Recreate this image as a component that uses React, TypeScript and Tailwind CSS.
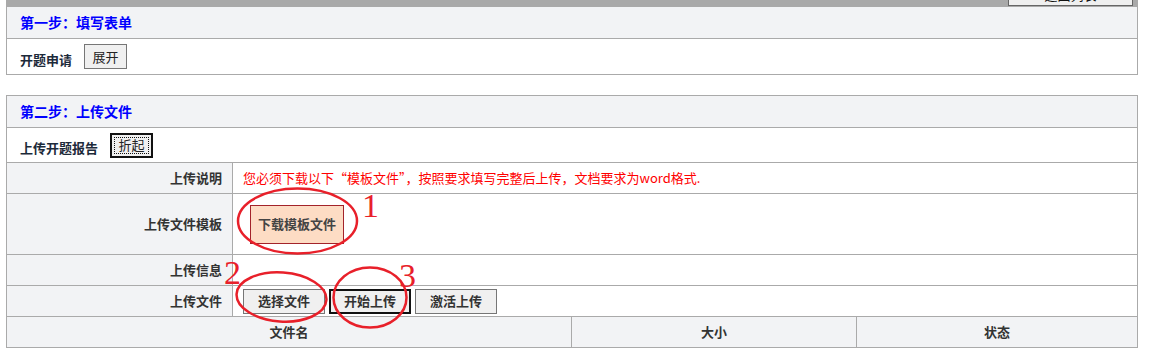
import React from "react"

const label = "font-bold text-[13px] text-[#333]"

function Row({ name, h, children }: { name: string; h: string; children?: React.ReactNode }) {
  return (
    <div className={`flex border-b border-[#aaaaaa] ${h}`}>
      <div className={`w-[226px] shrink-0 bg-[#f2f3f5] border-r border-[#aaaaaa] flex items-center justify-end pr-[10px] ${label}`}>
        {name}
      </div>
      <div className="flex-1 flex items-center pl-[10px]">{children}</div>
    </div>
  )
}

function Btn({ text, focused }: { text: string; focused?: boolean }) {
  return (
    <div
      className={`w-[82px] h-[25px] flex items-center justify-center bg-[#f0f0f0] font-bold text-[13px] text-[#333] ${
        focused ? "border-2 border-[#111]" : "border border-[#767676]"
      }`}
    >
      {text}
    </div>
  )
}

export default function App() {
  return (
    <div
      lang="zh-CN"
      className="relative w-[1160px] h-[364px] bg-white overflow-hidden font-['Noto_Sans_CJK_SC','Microsoft_YaHei',sans-serif]"
    >
      <div className="w-[1132px] ml-[6px]">
        {/* bottom of the previous section */}
        <div className="h-[7px] bg-[#a9a9a9] flex justify-end items-end pr-[5px] overflow-hidden">
          <div className="w-[125px] h-[26px] mb-[1px] shrink-0 bg-[#efefef] border border-[#666] flex items-end justify-center pb-[4px] text-[13px] leading-none text-[#111]">
            返回列表
          </div>
        </div>

        <div className="border-x border-b border-[#aaaaaa]">
          <div className="h-[32px] bg-[#f2f3f5] border-b border-[#aaaaaa] flex items-center pl-[13px] text-[14px] font-bold text-[#0000ff]">
            第一步：填写表单
          </div>
          <div className="h-[35px] flex items-center pl-[13px] gap-[12px]">
            <span className="pt-[7px] font-bold text-[13px] text-[#1c2a3a]">开题申请</span>
            <div className="w-[43px] h-[25px] flex items-center justify-center bg-[#f0f0f0] border border-[#767676] text-[13px] text-[#222]">
              展开
            </div>
          </div>
        </div>

        <div className="mt-[20px] border-x border-t border-[#aaaaaa]">
          <div className="h-[32px] bg-[#f2f3f5] border-b border-[#aaaaaa] flex items-center pl-[13px] text-[14px] font-bold text-[#0000ff]">
            第二步：上传文件
          </div>
          <div className="h-[35px] border-b border-[#aaaaaa] flex items-center pl-[13px] gap-[12px]">
            <span className="pt-[6px] font-bold text-[13px] text-[#1c2a3a]">上传开题报告</span>
            <div className="w-[43px] h-[25px] p-[2px] bg-[#f0f0f0] border-2 border-[#111]">
              <div className="w-full h-full border border-dotted border-[#111] flex items-center justify-center text-[13px] text-[#222]">
                折起
              </div>
            </div>
          </div>

          <Row name="上传说明" h="h-[31px]">
            <span className="text-[13px] text-[#ff0000]">
              您必须下载以下<span className="[font-feature-settings:'fwid']">“</span>模板文件
              <span className="[font-feature-settings:'fwid']">”</span>，按照要求填写完整后上传，文档要求为word格式.
            </span>
          </Row>
          <Row name="上传文件模板" h="h-[61px]">
            <div className="ml-[7px] w-[94px] h-[39px] bg-[#fddcc4] border border-[#a3232a] flex items-center justify-center font-bold text-[13px] text-[#444]">
              下载模板文件
            </div>
          </Row>
          <Row name="上传信息" h="h-[31px]" />
          <Row name="上传文件" h="h-[31px]">
            <div className="flex gap-[4px]">
              <Btn text="选择文件" />
              <Btn text="开始上传" focused />
              <Btn text="激活上传" />
            </div>
          </Row>

          <div className={`flex h-[31px] bg-[#f2f3f5] border-b border-[#aaaaaa] ${label}`}>
            <div className="w-[565px] border-r border-[#aaaaaa] flex items-center justify-center">文件名</div>
            <div className="w-[285px] border-r border-[#aaaaaa] flex items-center justify-center">大小</div>
            <div className="flex-1 flex items-center justify-center">状态</div>
          </div>
        </div>
      </div>

      {/* red hand-drawn annotations */}
      <svg className="absolute left-0 top-0 pointer-events-none" width="1160" height="364">
        <ellipse cx="297.5" cy="221" rx="59.5" ry="32.5" fill="none" stroke="#e8202a" strokeWidth="2.5" />
        <ellipse cx="281.5" cy="297" rx="45" ry="24.5" fill="none" stroke="#e8202a" strokeWidth="2.5" transform="rotate(4 281.5 297)" />
        <ellipse cx="370" cy="297.5" rx="36.5" ry="30" fill="none" stroke="#e8202a" strokeWidth="2.5" />
      </svg>
      <span className="absolute left-[362px] top-[189px] font-['Liberation_Serif',serif] text-[34px] leading-none text-[#e8202a]">1</span>
      <span className="absolute left-[224px] top-[256px] font-['Liberation_Serif',serif] text-[34px] leading-none text-[#e8202a]">2</span>
      <span className="absolute left-[399px] top-[259px] font-['Liberation_Serif',serif] text-[34px] leading-none text-[#e8202a]">3</span>
    </div>
  )
}
